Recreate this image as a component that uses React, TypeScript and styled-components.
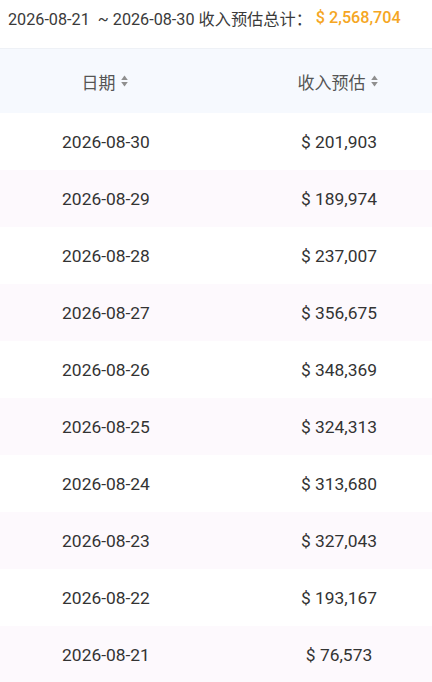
import React from "react";
import styled, { createGlobalStyle } from "styled-components";

const Global = createGlobalStyle`
  html, body { margin: 0; padding: 0; background: #ffffff; }
  body { font-family: Roboto, "Noto Sans CJK SC", sans-serif; }
`;

const Page = styled.div`
  width: 432px;
  height: 682px;
  overflow: hidden;
  background: #fff;
`;

const Summary = styled.div`
  height: 35px;
  display: flex;
  align-items: center;
  padding: 0 0 0 8px;
  font-size: 16.2px;
  color: #3a3a3a;
  white-space: pre;
  margin-bottom: 13px;
`;

const Total = styled.span`
  color: #f5a623;
  margin-left: 4px;
  font-weight: 500;
`;

const Table = styled.div`
  display: flex;
  flex-direction: column;
`;

const Row = styled.div<{ $bg: string; $h: number }>`
  display: grid;
  grid-template-columns: 212px 186px;
  justify-content: space-between;
  align-items: center;
  height: ${(p) => p.$h}px;
  background: ${(p) => p.$bg};
`;

const HeadRow = styled(Row)`
  border-top: 1px solid #eef1f6;
  box-sizing: border-box;
`;

const HeadCell = styled.div`
  display: flex;
  justify-content: center;
  align-items: center;
  gap: 5px;
  font-size: 17px;
  color: #555;
  padding-right: 3px;
`;

const Cell = styled.div`
  text-align: center;
  font-size: 17.4px;
  color: #333;
`;

const SortIcon = () => (
  <svg width="7" height="12" viewBox="0 0 7 12">
    <path d="M3.5 0.5 L6.8 5 H0.2 Z" fill="#8f8f8f" />
    <path d="M3.5 11.5 L6.8 7 H0.2 Z" fill="#8f8f8f" />
  </svg>
);

const data: [string, string][] = [
  ["2026-08-30", "201,903"],
  ["2026-08-29", "189,974"],
  ["2026-08-28", "237,007"],
  ["2026-08-27", "356,675"],
  ["2026-08-26", "348,369"],
  ["2026-08-25", "324,313"],
  ["2026-08-24", "313,680"],
  ["2026-08-23", "327,043"],
  ["2026-08-22", "193,167"],
  ["2026-08-21", "76,573"],
];

export default function App() {
  return (
    <Page>
      <Global />
      <Summary>
        {"2026-08-21  ~ 2026-08-30 收入预估总计："}
        <Total>$ 2,568,704</Total>
      </Summary>
      <Table>
        <HeadRow $bg="#f6f9fe" $h={65}>
          <HeadCell>
            日期
            <SortIcon />
          </HeadCell>
          <HeadCell>
            收入预估
            <SortIcon />
          </HeadCell>
        </HeadRow>
        {data.map(([d, v], i) => (
          <Row key={d} $bg={i % 2 ? "#fdf9fd" : "#ffffff"} $h={57}>
            <Cell>{d}</Cell>
            <Cell>$ {v}</Cell>
          </Row>
        ))}
      </Table>
    </Page>
  );
}
